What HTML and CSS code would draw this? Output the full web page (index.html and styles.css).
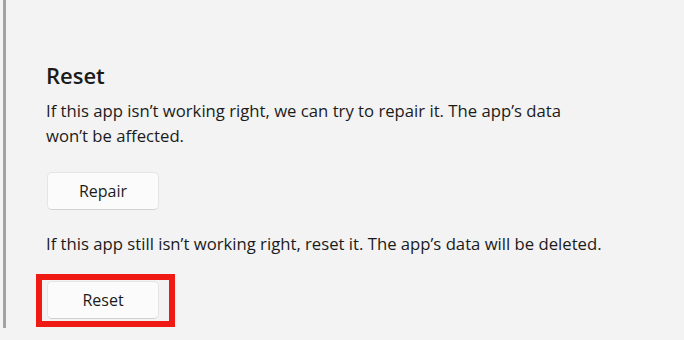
FILE: index.html
```html
<!DOCTYPE html>
<html lang="en">

<head>
    <meta charset="UTF-8">
    <title>Reset</title>
    <link rel="stylesheet" href="styles.css">
</head>

<body>

    <div class="pane">
        <h2 class="section-title">Reset</h2>
        <p class="desc">If this app isn’t working right, we can try to repair it. The app’s data<br>won’t be affected.</p>
        <button class="btn">Repair</button>

        <p class="desc desc-second">If this app still isn’t working right, reset it. The app’s data will be deleted.</p>
        <div class="highlight-wrap">
            <button class="btn">Reset</button>
            <span class="highlight"></span>
        </div>
    </div>

</body>

</html>
```

FILE: styles.css
```css
body {
    margin: 0;
    background: #f3f3f3;
    font-family: "Open Sans", "Noto Sans", sans-serif;
    color: #1b1b1b;
}

.pane {
    margin-left: 3px;
    border-left: 3px solid #a3a3a3;
    height: 328px;
    padding: 60px 0 0 40px;
    box-sizing: border-box;
}

.section-title {
    font-size: 22px;
    font-weight: 600;
    line-height: 30px;
    margin: 0 0 8px;
}

.desc {
    font-size: 16.7px;
    line-height: 25px;
    margin: 0 0 24px;
}

.desc-second {
    margin: 21px 0 25px;
}

.btn {
    display: block;
    width: 112px;
    height: 38px;
    background: #fbfbfb;
    border: 1px solid #e5e5e5;
    border-bottom-color: #d2d2d2;
    border-radius: 5px;
    font-family: inherit;
    font-size: 16px;
    color: #1b1b1b;
    margin: 0 0 0 1px;
    padding: 0;
}

.highlight-wrap {
    position: relative;
    width: 114px;
}

.highlight {
    position: absolute;
    left: -10px;
    top: -7px;
    width: 127px;
    height: 41px;
    border: 6px solid #f01a14;
}
```
